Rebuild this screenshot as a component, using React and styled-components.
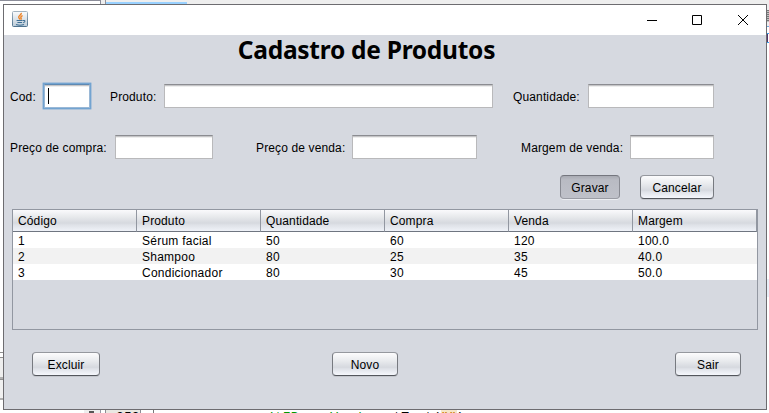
import React from "react";
import styled, { createGlobalStyle, css } from "styled-components";

const Global = createGlobalStyle`
  *, *::before, *::after { box-sizing: border-box; }
  html, body { margin: 0; padding: 0; overflow: hidden; }
  body { font-family: "Liberation Sans", Arial, sans-serif; font-size: 12px; letter-spacing: 0.13px; color: #000; }
`;

const Desktop = styled.div`
  display: grid;
  grid-template: 4px 406px 3px / 3px 764px 2px;
  width: 769px;
  height: 413px;
  overflow: hidden;
  background: #fff;
`;

/* Slices of the IDE that stay visible around the window */
const TopStrip = styled.div`
  grid-column: 1 / -1;
  display: flex;
  background: #eeeeee;
`;

const DocumentEdge = styled.div`
  width: 101px;
  background: #fff;
  border: solid #8c8d99;
  border-width: 1px 1px 0 0;
`;

const SelectedTab = styled.div`
  width: 82px;
  margin-left: 4px;
  border-left: 1px solid #90919a;
  background: linear-gradient(#eeeeee 2px, #99d1ff 2px);
`;

const SideStrip = styled.div`
  display: flex;
  flex-direction: column;
`;

const LeftStrip = styled(SideStrip)`
  justify-content: flex-end;
  padding-bottom: 10px;
`;

const PanelEdge = styled.div`
  height: ${(p) => p.$h}px;
  border-top: 1px solid #8f8f8f;
  border-bottom: ${(p) => (p.$h > 10 ? 2 : 0)}px solid #b0b0b0;
  background: ${(p) => p.$fill};
`;

const ScrollGrip = styled.div`
  height: 23px;
  background: linear-gradient(#eeeeee 6px, transparent 6px 18px, #eeeeee 18px),
    repeating-linear-gradient(#777 0 1px, #c4c4c4 1px 2px);
  border-bottom: 1px solid #6fa8dc;
`;

const ClippedGlyph = styled.div`
  height: 10px;
  margin-top: 6px;
  border: solid #3aa0e8;
  border-width: 1px 0;
  background: linear-gradient(90deg, #52356b 1px, #fff 1px);
`;

const CurrentLine = styled.div`
  height: 18px;
  margin-top: 236px;
  background: #e9eff8;
`;

const EditorStrip = styled.div`
  grid-column: 1 / -1;
  display: flex;
  height: 3px;
  padding-left: 84px;
  overflow: hidden;
  font: 13px/15px "Liberation Mono", monospace;
  letter-spacing: 0.1px;
  white-space: pre;
`;

const Scroller = styled.div`
  width: 17px;
  height: 3px;
  padding: 1px 6px 0 5px;
  background: linear-gradient(#555, #555) content-box, #eeeeee;
  border-right: 1px solid #9999a4;
`;

const Gutter = styled.div`
  width: 36px;
  margin-left: 4px;
  padding-left: 10px;
  border: solid #8c8c94;
  border-width: 0 1px;
  background: #e9e8e2;
`;

const CodeLine = styled.div`
  margin-left: 12px;
  padding-left: 113px;
  border-left: 1px solid #777;
`;

const Identifier = styled.span`
  color: #009900;
`;

const StringLiteral = styled.span`
  color: #ce7b00;
  background: #f6e6c8;
`;

const Window = styled.main`
  border: 1px solid #6d6c70;
  background: #d6d9e0;
  display: flex;
  flex-direction: column;
`;

const TitleBar = styled.header`
  height: 30px;
  flex: none;
  background: #fff;
  display: flex;
  align-items: center;
  justify-content: space-between;
  padding: 0 17px 0 8px;
`;

const Controls = styled.div`
  display: flex;
  gap: 35px;
  margin-top: -2px;
  svg { display: block; }
`;

const JavaIconSvg = styled.svg`
  display: block;
  margin-top: -2px;
`;

const Client = styled.div`
  flex: 1;
  display: flex;
  flex-direction: column;
  padding: 0 8px;
`;

const Title = styled.h1`
  margin: 0;
  height: 48px;
  padding-right: 37px;
  text-align: center;
  font: bold 24.5px/30px "Noto Sans", "Open Sans", sans-serif;
  letter-spacing: -0.27px;
  white-space: nowrap;
`;

const FormRow = styled.div`
  display: flex;
  align-items: center;
  height: 26px;
  margin: 0 0 ${(p) => p.$after}px -2px;
`;

const Label = styled.label`
  width: ${(p) => p.$w}px;
  flex: none;
  white-space: nowrap;
  line-height: 14px;
  padding-top: 1px;
`;

const Field = styled.div`
  width: ${(p) => p.$w}px;
  height: 24px;
  flex: none;
  margin-right: ${(p) => p.$gap || 0}px;
  background: linear-gradient(#c5c5c7 0 1px, #eeeeee 1px 2px, #fff 2px);
  border: 1px solid #b9b9bb;
  border-top-color: #8b8c91;
  display: flex;
  align-items: center;
  padding-left: 3px;
  ${(p) =>
    p.$focused &&
    css`
      box-shadow: 0 0 0 1.4px #73a4d1;
      border-color: #9ab8d6;
      border-top-color: #5f89b2;
    `}
`;

const Caret = styled.span`
  width: 1px;
  height: 16px;
  background: #000;
`;

const ButtonRow = styled.div`
  display: flex;
  height: 24px;
`;

const FormActions = styled(ButtonRow)`
  justify-content: flex-end;
  gap: 20px;
  margin: 0 44px 10px 0;
`;

const FooterActions = styled(ButtonRow)`
  display: grid;
  grid-template-columns: 300px 1fr auto;
  justify-items: start;
  margin: 22px 17px 0 20px;
`;

const Button = styled.button`
  width: ${(p) => p.$w}px;
  height: 24px;
  padding: 1px 0 0;
  font: inherit;
  letter-spacing: inherit;
  line-height: 14px;
  color: #000;
  border: 1px solid #777a80;
  border-top-color: #95989e;
  border-bottom-color: #53565c;
  border-radius: 4px;
  background: linear-gradient(#fcfcfd 0, #e9ebee 35%, #d6d9df 65%, #dfe2e8 72%, #f5f7fc 100%);
  box-shadow: 0 1px 0 #c3c6cc;
  ${(p) =>
    p.$pressed &&
    css`
      border-color: #888a92;
      border-top-color: #74767e;
      border-bottom-color: #9a9ca4;
      background: linear-gradient(#a9abb3, #b9bbc3 4px, #bfc1c9);
      box-shadow: 0 1px 0 #eceef2;
    `}
`;

const TableFrame = styled.div`
  width: 746px;
  height: 121px;
  border: 1px solid #9297a1;
`;

const Table = styled.table`
  width: 744px;
  table-layout: fixed;
  border-collapse: separate;
  border-spacing: 0;
`;

const HeadCell = styled.th`
  height: 22px;
  padding: 0 0 0 5px;
  text-align: left;
  font-weight: normal;
  line-height: 14px;
  border-right: 1px solid #9297a1;
  border-bottom: 1px solid #6f7580;
  background: linear-gradient(#fafafc 0, #e6e8eb 35%, #d6d9df 62%, #dfe2e8 72%, #eff2f8 100%);
`;

const Row = styled.tr`
  background: ${(p) => (p.$alt ? "#f2f2f2" : "#fff")};
`;

const Cell = styled.td`
  height: 16px;
  padding: 2px 0 0 5px;
  line-height: 14px;
  letter-spacing: 0.25px;
`;

const columns = ["Código", "Produto", "Quantidade", "Compra", "Venda", "Margem"];
const products = [
  ["1", "Sérum facial", "50", "60", "120", "100.0"],
  ["2", "Shampoo", "80", "25", "35", "40.0"],
  ["3", "Condicionador", "80", "30", "45", "50.0"],
];

function JavaIcon() {
  return (
    <JavaIconSvg width="16" height="16" viewBox="0 0 16 16">
      <defs>
        <linearGradient id="tile" x1="0" y1="0" x2="0" y2="1">
          <stop offset="0" stopColor="#fbfcfd" />
          <stop offset="1" stopColor="#bccbd8" />
        </linearGradient>
        <linearGradient id="edge" x1="0" y1="0" x2="0" y2="1">
          <stop offset="0" stopColor="#a3b3c0" />
          <stop offset="1" stopColor="#4f738f" />
        </linearGradient>
      </defs>
      <rect x="0.5" y="0.5" width="15" height="15" rx="1" fill="url(#tile)" stroke="url(#edge)" />
      <path d="M9.3 1.8C9.8 4.1 6 4.6 6.8 6.6c.2.6.9 1.1 1.2 1.9M10.6 4.6C8.3 5.5 8.7 6.4 9.1 7.1c.3.6.1 1-.3 1.4" fill="none" stroke="#ee8122" strokeWidth="1.4" />
      <path d="M4.6 9.5h6M5.4 11.5h4.7M4 13.5c2.4.8 6 .7 8-.1M11 9.6c2.5-.8 2.6 1.5.2 2.1" fill="none" stroke="#3f6f94" strokeWidth="1.1" />
    </JavaIconSvg>
  );
}

export default function App() {
  return (
    <>
      <Global />
      <Desktop>
        <TopStrip>
          <DocumentEdge />
          <SelectedTab />
        </TopStrip>
        <LeftStrip>
          <PanelEdge $h={5} $fill="#fff" />
          <PanelEdge $h={22} $fill="#eeeeee" />
          <PanelEdge $h={21} $fill="#f0f0f0" />
        </LeftStrip>
        <Window>
          <TitleBar>
            <JavaIcon />
            <Controls>
              <svg width="11" height="11"><path d="M1 6.5h10" stroke="#000" /></svg>
              <svg width="11" height="11"><path d="M.5 1.5h9v9h-9z" fill="none" stroke="#000" /></svg>
              <svg width="11" height="11"><path d="M0 1l10 10M10 1L0 11" stroke="#000" /></svg>
            </Controls>
          </TitleBar>
          <Client>
            <Title>Cadastro de Produtos</Title>
            <FormRow $after={25}>
              <Label $w={34}>Cod:</Label>
              <Field $w={46} $gap={20} $focused><Caret /></Field>
              <Label $w={54}>Produto:</Label>
              <Field $w={329} $gap={20} />
              <Label $w={75}>Quantidade:</Label>
              <Field $w={126} />
            </FormRow>
            <FormRow $after={15}>
              <Label $w={105}>Preço de compra:</Label>
              <Field $w={98} $gap={43} />
              <Label $w={96}>Preço de venda:</Label>
              <Field $w={125} $gap={44} />
              <Label $w={109}>Margem de venda:</Label>
              <Field $w={84} />
            </FormRow>
            <FormActions>
              <Button $w={60} $pressed>Gravar</Button>
              <Button $w={74}>Cancelar</Button>
            </FormActions>
            <TableFrame>
              <Table>
                <thead>
                  <tr>{columns.map((c) => <HeadCell key={c}>{c}</HeadCell>)}</tr>
                </thead>
                <tbody>
                  {products.map((r, i) => (
                    <Row key={r[0]} $alt={i % 2 === 1}>
                      {r.map((v, j) => <Cell key={j}>{v}</Cell>)}
                    </Row>
                  ))}
                </tbody>
              </Table>
            </TableFrame>
            <FooterActions>
              <Button $w={68}>Excluir</Button>
              <Button $w={66}>Novo</Button>
              <Button $w={66}>Sair</Button>
            </FooterActions>
          </Client>
        </Window>
        <SideStrip>
          <ScrollGrip />
          <ClippedGlyph />
          <CurrentLine />
        </SideStrip>
        <EditorStrip>
          <Scroller />
          <Gutter>359</Gutter>
          <CodeLine>
            <Identifier>jtFPrecoVenda</Identifier>.setText(<StringLiteral>""</StringLiteral>);
          </CodeLine>
        </EditorStrip>
      </Desktop>
    </>
  );
}
